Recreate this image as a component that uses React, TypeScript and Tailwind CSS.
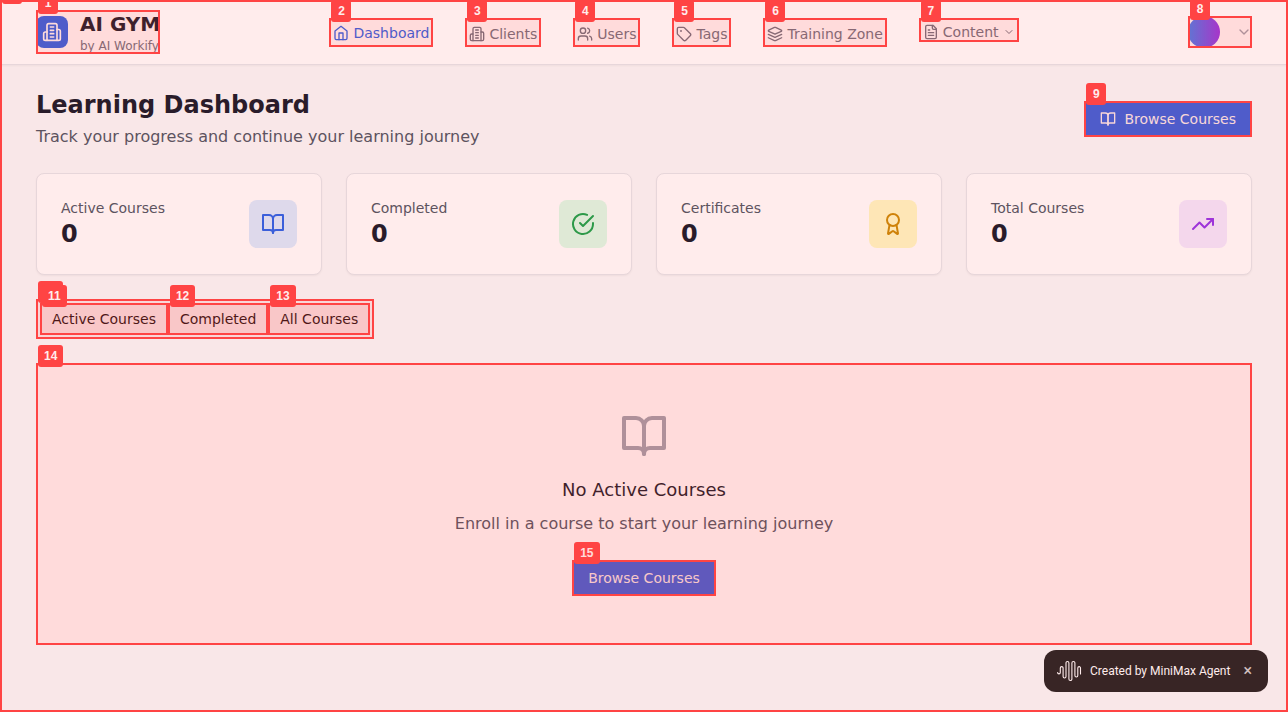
import type { ReactNode } from "react";

type IconProps = { className?: string; children?: ReactNode };

function Icon({ className = "size-4", children }: IconProps) {
  return (
    <svg viewBox="0 0 24 24" fill="none" stroke="currentColor" strokeWidth="2" strokeLinecap="round" strokeLinejoin="round" aria-hidden="true" className={`shrink-0 ${className}`}>
      {children}
    </svg>
  );
}

const HomeIcon = (p: IconProps) => (
  <Icon {...p}><path d="m3 9 9-7 9 7v11a2 2 0 0 1-2 2H5a2 2 0 0 1-2-2z" /><path d="M9 22V12h6v10" /></Icon>
);
const BuildingIcon = (p: IconProps) => (
  <Icon {...p}>
    <path d="M6 22V4a2 2 0 0 1 2-2h8a2 2 0 0 1 2 2v18Z" />
    <path d="M6 12H4a2 2 0 0 0-2 2v6a2 2 0 0 0 2 2h2" />
    <path d="M18 9h2a2 2 0 0 1 2 2v9a2 2 0 0 1-2 2h-2" />
    <path d="M10 6h4M10 10h4M10 14h4M10 18h4" />
  </Icon>
);
const UsersIcon = (p: IconProps) => (
  <Icon {...p}>
    <path d="M16 21v-2a4 4 0 0 0-4-4H6a4 4 0 0 0-4 4v2" /><circle cx="9" cy="7" r="4" />
    <path d="M22 21v-2a4 4 0 0 0-3-3.87M16 3.13a4 4 0 0 1 0 7.75" />
  </Icon>
);
const TagIcon = (p: IconProps) => (
  <Icon {...p}>
    <path d="M12.586 2.586A2 2 0 0 0 11.172 2H4a2 2 0 0 0-2 2v7.172a2 2 0 0 0 .586 1.414l8.704 8.704a2.426 2.426 0 0 0 3.42 0l6.58-6.58a2.426 2.426 0 0 0 0-3.42z" />
    <circle cx="7.5" cy="7.5" r=".5" fill="currentColor" />
  </Icon>
);
const LayersIcon = (p: IconProps) => (
  <Icon {...p}>
    <path d="m12.83 2.18a2 2 0 0 0-1.66 0L2.6 6.08a1 1 0 0 0 0 1.83l8.58 3.91a2 2 0 0 0 1.66 0l8.58-3.9a1 1 0 0 0 0-1.83Z" />
    <path d="m22 17.65-9.17 4.16a2 2 0 0 1-1.66 0L2 17.65" />
    <path d="m22 12.65-9.17 4.16a2 2 0 0 1-1.66 0L2 12.65" />
  </Icon>
);
const FileIcon = (p: IconProps) => (
  <Icon {...p}>
    <path d="M15 2H6a2 2 0 0 0-2 2v16a2 2 0 0 0 2 2h12a2 2 0 0 0 2-2V7Z" />
    <path d="M14 2v4a2 2 0 0 0 2 2h4M10 9H8M16 13H8M16 17H8" />
  </Icon>
);
const ChevronIcon = (p: IconProps) => (
  <Icon {...p}><path d="m6 9 6 6 6-6" /></Icon>
);
const BookIcon = (p: IconProps) => (
  <Icon {...p}>
    <path d="M2 3h6a4 4 0 0 1 4 4v14a3 3 0 0 0-3-3H2z" /><path d="M22 3h-6a4 4 0 0 0-4 4v14a3 3 0 0 1 3-3h7z" />
  </Icon>
);
const CheckIcon = (p: IconProps) => (
  <Icon {...p}><path d="M22 11.08V12a10 10 0 1 1-5.93-9.14" /><path d="m9 11 3 3L22 4" /></Icon>
);
const AwardIcon = (p: IconProps) => (
  <Icon {...p}>
    <path d="m15.477 12.89 1.515 8.526a.5.5 0 0 1-.81.47l-3.58-2.687a1 1 0 0 0-1.197 0l-3.586 2.686a.5.5 0 0 1-.81-.469l1.514-8.526" />
    <circle cx="12" cy="8" r="6" />
  </Icon>
);
const TrendIcon = (p: IconProps) => (
  <Icon {...p}><path d="m22 7-8.500 8.500-5-5L2 17" /><path d="M16 7h6v6" /></Icon>
);

/** Numbered outline laid over the nearest positioned parent. */
function Mark({ n }: { n: number }) {
  return (
    <span aria-hidden="true" className="pointer-events-none absolute inset-0 z-10 border-2 border-[#ff4444] bg-[#ff4444]/10">
      <span className="absolute -top-5 left-0 flex h-[22px] min-w-5 items-center justify-center rounded-[3px] bg-[#ff4444] px-1.5 font-['Liberation_Sans',sans-serif] text-xs font-bold text-white">
        {n}
      </span>
    </span>
  );
}

const links = [
  { n: 3, label: "Clients", icon: BuildingIcon },
  { n: 4, label: "Users", icon: UsersIcon },
  { n: 5, label: "Tags", icon: TagIcon },
  { n: 6, label: "Training Zone", icon: LayersIcon },
];

const stats = [
  { label: "Active Courses", icon: BookIcon, tone: "bg-[#dbeafe] text-[#2563eb]" },
  { label: "Completed", icon: CheckIcon, tone: "bg-[#dcfce7] text-[#16a34a]" },
  { label: "Certificates", icon: AwardIcon, tone: "bg-[#fef9c3] text-[#ca8a04]" },
  { label: "Total Courses", icon: TrendIcon, tone: "bg-[#f3e8ff] text-[#9333ea]" },
];

const tabs = [
  { n: 11, label: "Active Courses" },
  { n: 12, label: "Completed" },
  { n: 13, label: "All Courses" },
];

export default function App() {
  return (
    <div className="relative min-h-screen overflow-hidden bg-[#f9fafb] font-['DejaVu_Sans',sans-serif] text-[#111827]">
      <header className="border-b border-[#e5e7eb] bg-white shadow-xs">
        <div className="flex h-16 items-center justify-between px-9">
          <a href="#home" className="relative flex h-11 w-[124px] items-center gap-3 whitespace-nowrap">
            <span className="flex size-8 shrink-0 items-center justify-center rounded-lg bg-[#2563eb] text-white">
              <BuildingIcon className="size-5" />
            </span>
            <span className="flex flex-col">
              <span className="text-xl leading-7 font-bold">AI GYM</span>
              <span className="text-xs leading-4 text-[#6b7280]">by AI Workify</span>
            </span>
            <Mark n={1} />
          </a>
          <nav className="flex items-start gap-8 text-sm text-[#6b7280]">
            <a href="#dashboard" className="relative flex h-[29px] items-center gap-1 px-1 pt-0.5 text-[#2563eb]">
              <HomeIcon />Dashboard<Mark n={2} />
            </a>
            {links.map(({ n, label, icon: LinkIcon }) => (
              <a key={n} href={`#${label}`} className="relative flex h-[29px] items-center gap-1 px-1 pt-1">
                <LinkIcon />{label}<Mark n={n} />
              </a>
            ))}
            <button type="button" className="relative flex h-6 items-center gap-1 px-1 pt-1">
              <FileIcon />Content<ChevronIcon className="size-3" /><Mark n={7} />
            </button>
          </nav>
          <button type="button" aria-label="Account menu" className="relative flex w-16 items-center justify-between">
            <span className="size-8 rounded-full bg-linear-to-r/srgb from-[#3b82f6] to-[#9333ea]" />
            <ChevronIcon className="size-4 text-[#9ca3af]" />
            <Mark n={8} />
          </button>
        </div>
      </header>

      <main className="px-9 pt-6">
        <div className="flex items-center justify-between">
          <div>
            <h1 className="text-2xl font-bold">Learning Dashboard</h1>
            <p className="mt-1 leading-6 text-[#4b5563]">Track your progress and continue your learning journey</p>
          </div>
          <button type="button" className="relative flex h-9 items-center gap-2 bg-[#2563eb] px-4 text-sm text-[#f8fafc]">
            <BookIcon />Browse Courses<Mark n={9} />
          </button>
        </div>

        <section aria-label="Course totals" className="mt-6 grid grid-cols-4 gap-6">
          {stats.map(({ label, icon: StatIcon, tone }) => (
            <div key={label} className="flex items-center justify-between rounded-lg border border-[#e5e7eb] bg-white p-6 shadow-xs">
              <div>
                <p className="text-sm text-[#4b5563]">{label}</p>
                <p className="text-2xl font-bold">0</p>
              </div>
              <span className={`flex size-12 items-center justify-center rounded-lg ${tone}`}>
                <StatIcon className="size-6" />
              </span>
            </div>
          ))}
        </section>

        <div role="tablist" aria-label="Courses" className="relative mt-6 flex h-10 w-fit p-1">
          <Mark n={10} />
          {tabs.map(({ n, label }) => (
            <button key={n} type="button" role="tab" aria-selected={n === 11} className="relative h-8 px-3 text-sm text-[#0a0a0a]">
              {label}<Mark n={n} />
            </button>
          ))}
        </div>

        <section className="relative mt-6 flex flex-col items-center rounded-lg bg-white px-6 py-[49px]">
          <BookIcon className="size-12 text-[#9ca3af]" />
          <h2 className="mt-4 text-lg leading-7">No Active Courses</h2>
          <p className="mt-2 leading-6 text-[#4b5563]">Enroll in a course to start your learning journey</p>
          <button type="button" className="relative mt-6 h-9 bg-[#2563eb] px-4 text-sm text-[#f8fafc]">
            Browse Courses<Mark n={15} />
          </button>
          <Mark n={14} />
        </section>
      </main>

      <aside className="fixed right-5 bottom-5 flex h-[42px] w-56 items-center rounded-xl bg-[#222222] px-3 font-[Roboto,sans-serif] text-xs text-white">
        <svg viewBox="0 0 26 22" fill="none" stroke="currentColor" strokeWidth="1.1" strokeLinecap="round" strokeLinejoin="round" aria-hidden="true" className="h-[22px] w-[26px] shrink-0">
          <path d="M1.600 12.500a1.350 1.350 0 0 0 2.700 0V8a1.400 1.400 0 0 1 2.800 0v8.500a1.400 1.400 0 0 0 2.900 0V3a1.450 1.450 0 0 1 2.900 0v16a1.500 1.500 0 0 0 3 0V3a1.500 1.500 0 0 1 3 0v12.500a1.450 1.450 0 0 0 2.900 0V8a1.350 1.350 0 0 1 2.700 0v6" />
        </svg>
        <span className="ml-2 whitespace-nowrap">Created by MiniMax Agent</span>
        <button type="button" aria-label="Close" className="ml-auto px-1 text-base leading-5 font-medium text-[#cccccc]">×</button>
      </aside>
      <Mark n={0} />
    </div>
  );
}
